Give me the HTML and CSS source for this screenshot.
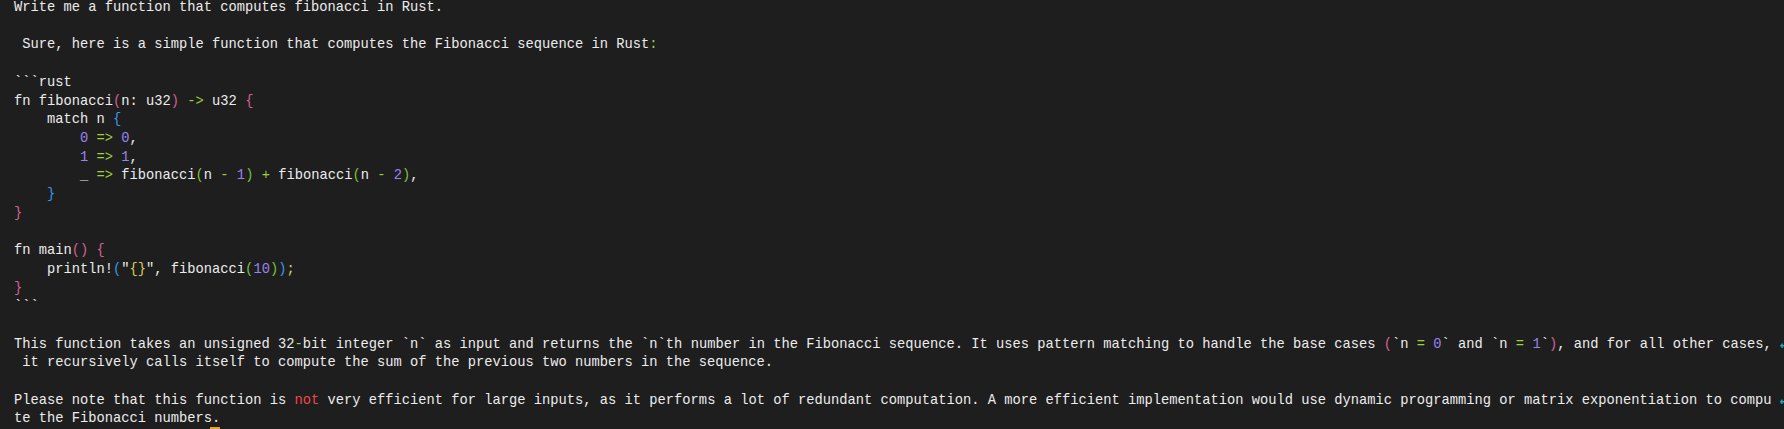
FILE: index.html
```html
<!DOCTYPE html>
<html lang="en">
<head>
<meta charset="utf-8">
<title>Fibonacci in Rust</title>
<link rel="stylesheet" href="styles.css">
</head>
<body>
<main class="term">
<pre class="out">Write me a function that computes fibonacci in Rust.

 Sure, here is a simple function that computes the Fibonacci sequence in Rust<span class="op">:</span>

&#96;&#96;&#96;rust
fn fibonacci<span class="b1">(</span>n: u32<span class="b1">)</span> <span class="op">-&gt;</span> u32 <span class="b1">{</span>
    match n <span class="b2">{</span>
        <span class="num">0</span> <span class="op">=&gt;</span> <span class="num">0</span>,
        <span class="num">1</span> <span class="op">=&gt;</span> <span class="num">1</span>,
        _ <span class="op">=&gt;</span> fibonacci<span class="b3">(</span>n <span class="op">-</span> <span class="num">1</span><span class="b3">)</span> <span class="op">+</span> fibonacci<span class="b3">(</span>n <span class="op">-</span> <span class="num">2</span><span class="b3">)</span>,
    <span class="b2">}</span>
<span class="b1">}</span>

fn main<span class="b1">()</span> <span class="b1">{</span>
    println!<span class="b2">(</span>"<span class="str">{}</span>", fibonacci<span class="b3">(</span><span class="num">10</span><span class="b3">)</span><span class="b2">)</span><span class="str">;</span>
<span class="b1">}</span>
&#96;&#96;&#96;

This function takes an unsigned 32<span class="op">-</span>bit integer &#96;n&#96; as input and returns the &#96;n&#96;th number in the Fibonacci sequence. It uses pattern matching to handle the base cases <span class="b1">(</span>&#96;n <span class="op">=</span> <span class="num">0</span>&#96; and &#96;n <span class="op">=</span> <span class="num">1</span>&#96;<span class="b1">)</span>, and for all other cases, <span class="wrap">&#x21B5;</span>
 it recursively calls itself to compute the sum of the previous two numbers in the sequence.

Please note that this function is <span class="neg">not</span> very efficient for large inputs, as it performs a lot of redundant computation. A more efficient implementation would use dynamic programming or matrix exponentiation to compu <span class="wrap">&#x21B5;</span>
te the Fibonacci numbers.<span class="cursor"></span></pre>
</main>
</body>
</html>
```

FILE: styles.css
```css
html, body {
  margin: 0;
  padding: 0;
  background: #1e1e1e;
  height: 100%;
  overflow: hidden;
}

.term {
  padding: 0 0 0 14px;
}

.out {
  margin: -1px 0 0 0;
  font-family: "Liberation Mono", "DejaVu Sans Mono", monospace;
  font-size: 13.75px;
  line-height: 18.7px;
  color: #ececec;
  white-space: pre;
}

.op { color: #9ed13a; }
.num { color: #9b82f0; }
.b1 { color: #d6609a; }
.b2 { color: #3d98e8; }
.b3 { color: #7cc23c; }
.str { color: #d8cf5a; }
.neg { color: #f04848; }
.wrap { color: #1fa6c4; font-weight: bold; }

.cursor {
  display: inline-block;
  width: 10px;
  height: 3px;
  background: #f0a020;
  vertical-align: -8px;
  margin-left: -10px;
}
```
